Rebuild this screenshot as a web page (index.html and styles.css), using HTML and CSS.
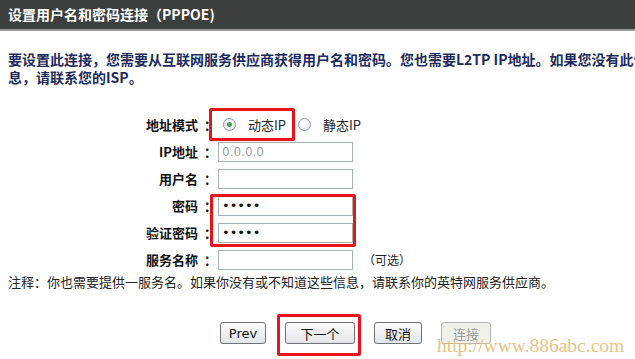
FILE: index.html
```html
<!DOCTYPE html>
<html>
    <head>
        <meta charset="utf-8">
        <title>PPPOE</title>
        <link rel="stylesheet" href="styles.css">
    </head>
    <body>
        <div id="page">
            <div id="title-bar">设置用户名和密码连接（PPPOE)</div>
            <div id="intro">
                <p class="line">要设置此连接，您需要从互联网服务供应商获得用户名和密码。您也需要L2TP IP地址。如果您没有此信</p>
                <p class="line">息，请联系您的ISP。</p>
            </div>
            <div id="form">
                <label class="lbl">地址模式<span class="colon">：</span></label>
                <div class="field mode">
                    <span class="radio checked"></span><span class="opt">动态IP</span>
                    <span class="radio"></span><span class="opt">静态IP</span>
                </div>
                <label class="lbl">IP地址<span class="colon">：</span></label>
                <div class="field"><input class="box" type="text" value="0.0.0.0" disabled></div>
                <label class="lbl">用户名<span class="colon">：</span></label>
                <div class="field"><input class="box" type="text"></div>
                <label class="lbl">密码<span class="colon">：</span></label>
                <div class="field"><input class="box pw" type="password" value="12345"></div>
                <label class="lbl">验证密码<span class="colon">：</span></label>
                <div class="field"><input class="box pw" type="password" value="12345"></div>
                <label class="lbl">服务名称<span class="colon">：</span></label>
                <div class="field"><input class="box" type="text"><span class="hint">（可选）</span></div>
            </div>
            <p id="note">注释：你也需要提供一服务名。如果你没有或不知道这些信息，请联系你的英特网服务供应商。</p>
            <div id="buttons">
                <button class="btn prev">Prev</button>
                <button class="btn next">下一个</button>
                <button class="btn cancel">取消</button>
                <button class="btn off">连接</button>
            </div>

            <!-- red marks drawn over the screenshot -->
            <div class="mark" id="mark-mode"></div>
            <div class="mark" id="mark-pw"></div>
            <div class="mark" id="mark-next"></div>
            <div id="watermark">http://www.886abc.com</div>
        </div>
    </body>
</html>
```

FILE: styles.css
```css
body {
    margin: 0px;
    padding: 0px;
    background-color: #fff;
    overflow: hidden;
    font-family: "DejaVu Sans", "Noto Sans CJK SC", sans-serif;
}
p {
    margin: 0px;
}
#page {
    position: relative;
    width: 635px;
    height: 359px;
    overflow: hidden;
}
#title-bar {
    height: 29px;
    line-height: 29px;
    padding-left: 8px;
    background-color: #3d3f3f;
    border-bottom: 2px solid #9a9a9a;
    color: #fff;
    font-size: 14px;
    font-weight: bold;
    font-family: "Noto Sans CJK SC", sans-serif;
}
#intro {
    margin-top: 19px;
    padding-left: 8px;
    color: #1c2a5c;
    font-size: 14px;
    font-weight: bold;
    font-family: "Noto Sans CJK SC", sans-serif;
}
.line {
    height: 18px;
    line-height: 18px;
    white-space: nowrap;
}
#form {
    margin-top: 25px;
    display: grid;
    grid-template-columns: 214px 1fr;
    grid-auto-rows: 27px;
}
.lbl {
    display: flex;
    align-items: center;
    justify-content: flex-end;
    color: #111;
    font-size: 13px;
    font-weight: bold;
    font-family: "Noto Sans CJK SC", sans-serif;
}
.colon {
    width: 10px;
    margin-left: 6px;
}
.field {
    display: flex;
    align-items: center;
    padding-left: 4px;
}
.mode {
    padding-left: 9px;
}
.radio {
    width: 11px;
    height: 11px;
    border-radius: 50%;
    border: 1px solid #8a9aa8;
    background: radial-gradient(circle at 40% 35%, #ffffff, #dfe4ea);
    position: relative;
}
.radio.checked::after {
    content: "";
    position: absolute;
    left: 3px;
    top: 3px;
    width: 5px;
    height: 5px;
    border-radius: 50%;
    background-color: #3fa55a;
}
.opt {
    margin-left: 12px;
    margin-right: 12px;
    color: #222;
    font-size: 13px;
    font-family: "Noto Sans CJK SC", sans-serif;
}
.box {
    box-sizing: border-box;
    width: 135px;
    height: 20px;
    margin: 0px;
    padding: 0px 3px;
    border: 1px solid #a9b0b6;
    background-color: #fff;
    font-size: 12px;
    font-family: "DejaVu Sans", sans-serif;
}
.box:disabled {
    color: #a0a0a0;
}
.pw {
    color: #111;
    font-size: 13px;
}
.hint {
    margin-left: 10px;
    color: #222;
    font-size: 12px;
    font-family: "Noto Sans CJK SC", sans-serif;
}
#note {
    margin-top: 1px;
    padding-left: 8px;
    height: 16px;
    line-height: 16px;
    color: #222;
    font-size: 13px;
    white-space: nowrap;
    font-family: "Noto Sans CJK SC", sans-serif;
}
#buttons {
    margin-top: 32px;
    display: flex;
    padding-left: 220px;
    gap: 19px;
}
.btn {
    height: 22px;
    padding: 0px;
    border: 1px solid #6f7378;
    border-radius: 3px;
    background: linear-gradient(#fbfbfb, #e3e5e8);
    color: #111;
    font-size: 13px;
    font-family: "DejaVu Sans", "Noto Sans CJK SC", sans-serif;
}
.prev {
    width: 46px;
}
.next {
    width: 70px;
}
.cancel {
    width: 48px;
}
.off {
    width: 50px;
    color: #999;
    border-color: #b5b5b5;
    background: #f1f1ec;
}
.mark {
    position: absolute;
    border: 3px solid #e8141c;
    border-radius: 2px;
}
#mark-mode {
    left: 209px;
    top: 108px;
    width: 80px;
    height: 27px;
}
#mark-pw {
    left: 210px;
    top: 194px;
    width: 140px;
    height: 47px;
}
#mark-next {
    left: 277px;
    top: 314px;
    width: 78px;
    height: 36px;
}
#watermark {
    position: absolute;
    left: 437px;
    top: 335px;
    color: #e4bd78;
    font-size: 19.5px;
    font-family: "Liberation Serif", serif;
    opacity: 0.9;
}
```
